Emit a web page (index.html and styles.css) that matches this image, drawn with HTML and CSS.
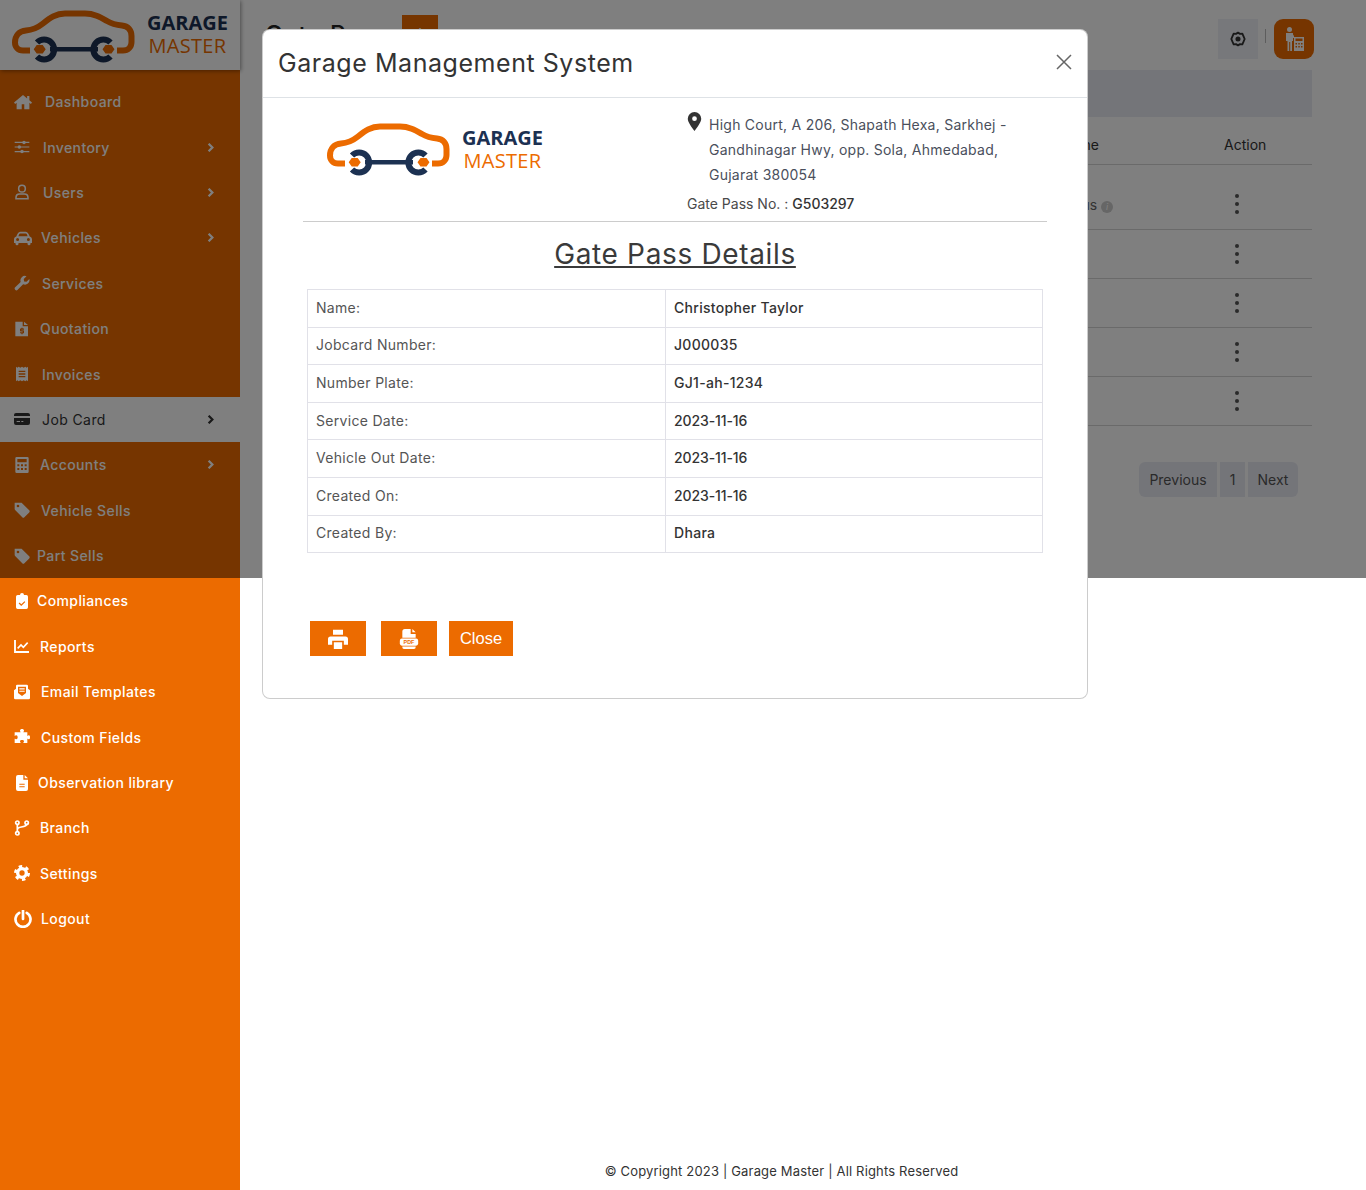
FILE: index.html
```html
<!DOCTYPE html>
<html lang="en">
<head>
  <meta charset="UTF-8" />
  <title>Garage Master - Gate Pass</title>
  <link rel="stylesheet" href="styles.css">
</head>
<body>

  <svg class="sprite" xmlns="http://www.w3.org/2000/svg">
    <symbol id="i-home" viewBox="0 0 24 24"><path d="M12 2.500 0 12.800l1.500 1.800L3.500 13v8.500h6.800V15h3.400v6.500h6.800V13l2 1.600 1.500-1.800-3.500-3V4h-3v3.200z"/></symbol>
    <symbol id="i-sliders" viewBox="0 0 24 24"><path d="M1 5.200h22M1 12h22M1 18.800h22" fill="none" stroke="currentColor" stroke-width="1.800"/><circle cx="15" cy="5.200" r="2.600"/><circle cx="8" cy="12" r="2.600"/><circle cx="12" cy="18.800" r="2.600"/></symbol>
    <symbol id="i-user" viewBox="0 0 24 24"><g fill="none" stroke="currentColor" stroke-width="2.300"><circle cx="12" cy="7" r="5"/><path d="M3 22v-1.500C3 17 5.500 15 8.500 15h7c3 0 5.500 2 5.500 5.500V22z"/></g></symbol>
    <symbol id="i-car" viewBox="0 0 24 24"><path fill-rule="evenodd" d="M0 14c0-2 1.200-3.600 3-4l1.600-3.500C5.300 5 6.800 3.500 8.500 3.500h7c1.700 0 3.200 1.500 3.900 3L21 10c1.800.4 3 2 3 4v4.500h-2v1a2 2 0 0 1-4 0v-1H6v1a2 2 0 0 1-4 0v-1H0zM7 6.800 5.800 9.800h12.400L17 6.800c-.2-.5-.7-.8-1.200-.8H8.200c-.5 0-1 .3-1.200.8zM4.800 16a2 2 0 1 0 0-4 2 2 0 0 0 0 4zm14.400 0a2 2 0 1 0 0-4 2 2 0 0 0 0 4z"/></symbol>
    <symbol id="i-wrench" viewBox="0 0 24 24"><path d="M23 6l-4.200 4.200-3.600-.6-.6-3.600L18.800 1.800A6.800 6.800 0 0 0 10 10.400L1.800 18.500a2.600 2.600 0 0 0 3.700 3.700L13.700 14A6.800 6.800 0 0 0 23 6z"/></symbol>
    <symbol id="i-quote" viewBox="0 0 24 24"><path fill-rule="evenodd" d="M2 1h11v7h8v15H2zM15 1l6 5h-6zM11 10h2v1.200h2v1.800h-4v1h3a1 1 0 0 1 1 1v2.500a1 1 0 0 1-1 1h-1V20h-2v-1.500H9v-1.800h4v-1h-3a1 1 0 0 1-1-1V12.200a1 1 0 0 1 1-1h1z"/></symbol>
    <symbol id="i-receipt" viewBox="0 0 24 24"><path fill-rule="evenodd" d="M3 1l2 1.500L7 1l2.500 1.500L12 1l2.500 1.500L17 1l2 1.500L21 1v22l-2-1.500-2 1.500-2.500-1.500L12 23l-2.500-1.500L7 23l-2-1.500L3 23zM7 7v2h10V7zm0 4v2h10v-2zm0 4v2h10v-2z"/></symbol>
    <symbol id="i-card" viewBox="0 0 24 24"><path fill-rule="evenodd" d="M3 3h18a3 3 0 0 1 3 3v1.500H0V6a3 3 0 0 1 3-3zM0 10.500h24V18a3 3 0 0 1-3 3H3a3 3 0 0 1-3-3zM4 15v1.500h5V15zm7 0v1.500h3V15z"/></symbol>
    <symbol id="i-calc" viewBox="0 0 24 24"><path fill-rule="evenodd" d="M4 0h16a2 2 0 0 1 2 2v20a2 2 0 0 1-2 2H4a2 2 0 0 1-2-2V2a2 2 0 0 1 2-2zM5 3v5h14V3zm0 8v3h3v-3zm5.500 0v3h3v-3zm5.500 0v3h3v-3zM5 16.500v3h3v-3zm5.500 0v3h3v-3zm5.500 0v3h3v-3z"/></symbol>
    <symbol id="i-tag" viewBox="0 0 24 24"><path fill-rule="evenodd" d="M1 1h9.500c.6 0 1.200.2 1.600.7L22.800 12.400a2.300 2.300 0 0 1 0 3.200l-7.200 7.200a2.300 2.300 0 0 1-3.200 0L1.700 12.100A2.300 2.300 0 0 1 1 10.500zM6 8a2 2 0 1 0 0-4 2 2 0 0 0 0 4z"/></symbol>
    <symbol id="i-clip" viewBox="0 0 24 24"><path fill-rule="evenodd" d="M9 3a3 3 0 0 1 6 0h3.500A2.500 2.500 0 0 1 21 5.500v16a2.500 2.500 0 0 1-2.500 2.500h-13A2.500 2.500 0 0 1 3 21.500v-16A2.500 2.500 0 0 1 5.500 3zm6.700 9.200-4.800 4.800-2.600-2.600-1.300 1.300 3.900 3.900 6.100-6.100z"/></symbol>
    <symbol id="i-chart" viewBox="0 0 24 24"><path d="M1.500 3v18h21" fill="none" stroke="currentColor" stroke-width="2.800"/><path d="M5.500 15.500l5-5 3.500 3.500 6.500-7" fill="none" stroke="currentColor" stroke-width="2.400"/></symbol>
    <symbol id="i-mail" viewBox="0 0 24 24"><path fill-rule="evenodd" d="M5 1h14a2 2 0 0 1 2 2v4l3 2.500V21a2 2 0 0 1-2 2H2a2 2 0 0 1-2-2V9.500L3 7V3a2 2 0 0 1 2-2zm1 3v9.500l6 4.500 6-4.500V4zm2 2.500h8v1.800H8zm0 3.500h8v1.800H8z"/></symbol>
    <symbol id="i-puzzle" viewBox="0 0 24 24"><path d="M9 2.500C9 1 10.200 0 12 0s3 1 3 2.500c0 1-1 1.500-1 2.500h6v5.500c1 0 1.500-1 2.500-1C23.700 9.500 24 11 24 12.500s-.3 3-1.500 3c-1 0-1.500-1-2.500-1V21h-6c0-1 1-1.500 1-2.500 0-1.200-1.300-2-3-2s-3 .8-3 2c0 1 1 2 1 2.500H1v-6.500c1 0 1.500 1 2.500 1 1.200 0 2-1.300 2-3s-.8-3-2-3c-1 0-1.500 1-2.500 1V5h9c0-1-1-1.500-1-2.500z"/></symbol>
    <symbol id="i-file" viewBox="0 0 24 24"><path fill-rule="evenodd" d="M3 3a3 3 0 0 1 3-3h8v7h7v14a3 3 0 0 1-3 3H6a3 3 0 0 1-3-3zM16 0l5 5h-5zM8 13v1.700h8V13zm0 3.800v1.700h8v-1.700z"/></symbol>
    <symbol id="i-branch" viewBox="0 0 24 24"><g fill="none" stroke="currentColor" stroke-width="2.600"><circle cx="5" cy="4" r="2.500"/><circle cx="5" cy="20" r="2.500"/><circle cx="19" cy="4" r="2.500"/><path d="M5 6.500v11M5 15c0-3 2-4 6-4.500 5-.6 8-1.500 8-4"/></g></symbol>
    <symbol id="i-gear" viewBox="0 0 24 24"><g fill="none" stroke="currentColor"><circle cx="12" cy="12" r="6.500" stroke-width="5"/><circle cx="12" cy="12" r="10" stroke-width="4" stroke-dasharray="5.200 5.270"/></g></symbol>
    <symbol id="i-hexgear" viewBox="0 0 24 24"><path d="M12 2.500 15 4.300 18.500 4 20 7.300 22 12 20 16.700 18.500 20 15 19.700 12 21.500 9 19.700 5.500 20 4 16.700 2 12 4 7.300 5.500 4 9 4.300z" fill="none" stroke="currentColor" stroke-width="2.800" stroke-linejoin="round"/><circle cx="12" cy="12" r="3.800"/></symbol>
    <symbol id="i-power" viewBox="0 0 24 24"><path d="M7 3.800a10 10 0 1 0 10 0M12 1v11" fill="none" stroke="currentColor" stroke-width="3.600" stroke-linecap="round"/></symbol>
    <symbol id="i-chevron" viewBox="0 0 24 24"><path d="M7 2l10 10L7 22" fill="none" stroke="currentColor" stroke-width="6"/></symbol>
    <symbol id="i-pin" viewBox="0 0 18 24"><path fill-rule="evenodd" d="M9 0a8.500 8.500 0 0 1 8.500 8.500C17.500 13 12 20 9 24 6 20 .5 13 .5 8.500A8.500 8.500 0 0 1 9 0zm0 5.500a3 3 0 1 0 0 6 3 3 0 0 0 0-6z"/></symbol>
    <symbol id="i-print" viewBox="0 0 24 24"><path fill-rule="evenodd" d="M6 1h12v6H6zM3 9h18a3 3 0 0 1 3 3v7h-5v-5H5v5H0v-7a3 3 0 0 1 3-3zM7 16h10v8H7z"/></symbol>
    <symbol id="i-pdf" viewBox="0 0 24 24">
      <path d="M4 3a3 3 0 0 1 3-3h7v6h6v4.500H4zM16 0l4 4h-4zM4 21h16v1a2 2 0 0 1-2 2H6a2 2 0 0 1-2-2z"/>
      <rect x="1" y="11.500" width="22" height="8.500" rx="2.500"/>
      <text class="pdf-mark" x="12" y="18">PDF</text>
    </symbol>
    <symbol id="i-logo" viewBox="0 0 123 53">
      <path d="M18 40.500H11C6 40.500 3 37 3 32.500 3 26 7 21 14 20.500 20 20 26 17.500 31 13.500 38 8 44 3.500 53 3.500H73C82 3.500 88 7 95 11 100 14 105 15 110 15.500 116 16 119.500 20 119.500 26V32C119.500 37 116 40.500 111 40.500H105" fill="none" stroke="#ec6b00" stroke-width="6"/>
      <path d="M25 32.500A10 10 0 1 1 25 46.500M98.500 32.500A10 10 0 1 0 98.500 46.500" fill="none" stroke="#1c3152" stroke-width="6"/>
      <path d="M38 37h48v4.600H38z" fill="#1c3152"/>
      <path d="M24.700 35h6l3 4.300-3 4.300h-6l-3-4.300zM93.500 35h6l3 4.300-3 4.300h-6l-3-4.300z" fill="#ec6b00"/>
    </symbol>
  </svg>

  <div class="layout">
    <aside class="sidebar">
      <div class="sidebar-logo">
        <svg class="logo-car"><use href="#i-logo"/></svg>
        <div class="logo-text"><b>GARAGE</b><span>MASTER</span></div>
      </div>
      <nav class="menu">
        <a class="menu-item"><svg class="ico ico-lg"><use href="#i-home"/></svg><span class="x8">Dashboard</span></a>
        <a class="menu-item"><svg class="ico"><use href="#i-sliders"/></svg><span class="x6">Inventory</span><svg class="arrow"><use href="#i-chevron"/></svg></a>
        <a class="menu-item"><svg class="ico"><use href="#i-user"/></svg><span class="x6">Users</span><svg class="arrow"><use href="#i-chevron"/></svg></a>
        <a class="menu-item"><svg class="ico ico-lg"><use href="#i-car"/></svg><span class="x4">Vehicles</span><svg class="arrow"><use href="#i-chevron"/></svg></a>
        <a class="menu-item"><svg class="ico"><use href="#i-wrench"/></svg><span class="x5">Services</span></a>
        <a class="menu-item"><svg class="ico"><use href="#i-quote"/></svg><span class="x3">Quotation</span></a>
        <a class="menu-item"><svg class="ico"><use href="#i-receipt"/></svg><span class="x5">Invoices</span></a>
        <a class="menu-item active"><svg class="ico"><use href="#i-card"/></svg><span class="x5">Job Card</span><svg class="arrow"><use href="#i-chevron"/></svg></a>
        <a class="menu-item"><svg class="ico"><use href="#i-calc"/></svg><span class="x3">Accounts</span><svg class="arrow"><use href="#i-chevron"/></svg></a>
        <a class="menu-item"><svg class="ico"><use href="#i-tag"/></svg><span class="x4">Vehicle Sells</span></a>
        <a class="menu-item"><svg class="ico"><use href="#i-tag"/></svg><span>Part Sells</span></a>
        <a class="menu-item"><svg class="ico"><use href="#i-clip"/></svg><span>Compliances</span></a>
        <a class="menu-item"><svg class="ico"><use href="#i-chart"/></svg><span class="x3">Reports</span></a>
        <a class="menu-item"><svg class="ico"><use href="#i-mail"/></svg><span class="x4">Email Templates</span></a>
        <a class="menu-item"><svg class="ico"><use href="#i-puzzle"/></svg><span class="x4">Custom Fields</span></a>
        <a class="menu-item"><svg class="ico"><use href="#i-file"/></svg><span class="x1">Observation library</span></a>
        <a class="menu-item"><svg class="ico"><use href="#i-branch"/></svg><span class="x3">Branch</span></a>
        <a class="menu-item"><svg class="ico"><use href="#i-gear"/></svg><span class="x3">Settings</span></a>
        <a class="menu-item"><svg class="ico ico-lg"><use href="#i-power"/></svg><span class="x4">Logout</span></a>
      </nav>
    </aside>

    <main class="content">
      <div class="topbar">
        <h2 class="page-title">Gate Pass</h2>
        <button class="add-btn">+</button>
        <div class="top-actions">
          <div class="gear-box"><svg class="gear-ico"><use href="#i-hexgear"/></svg></div>
          <div class="top-sep"></div>
          <div class="user-btn">
            <svg class="user-ico" viewBox="0 0 19 24">
              <circle cx="4.500" cy="2.500" r="2.500"/>
              <path d="M1 6h7v1.500L9 9v2H8v3H7v10H5.200V15h-1v9H2.500V14H1z"/>
              <path fill-rule="evenodd" d="M9 10h10v14H9zM10.500 11.500V14h7v-2.500zM10.500 16v1.500H12V16zm2.800 0v1.500h1.500V16zm2.700 0v1.500h1.500V16zM10.500 19v1.500H12V19zm2.800 0v1.500h1.500V19zm2.700 0v1.500h1.500V19z"/>
            </svg>
          </div>
        </div>
      </div>
      <div class="filter-band"></div>
      <div class="list">
        <div class="list-row list-head"><span class="col-name">Service Name</span><span class="col-action">Action</span></div>
        <div class="list-row first"><span class="col-name">Status <i class="info">i</i></span><span class="col-action"><i class="dots"></i></span></div>
        <div class="list-row"><span class="col-name"></span><span class="col-action"><i class="dots"></i></span></div>
        <div class="list-row"><span class="col-name"></span><span class="col-action"><i class="dots"></i></span></div>
        <div class="list-row"><span class="col-name"></span><span class="col-action"><i class="dots"></i></span></div>
        <div class="list-row"><span class="col-name"></span><span class="col-action"><i class="dots"></i></span></div>
      </div>
      <div class="pagination">
        <span class="page-link prev">Previous</span>
        <span class="page-link num">1</span>
        <span class="page-link next">Next</span>
      </div>
      <footer class="copyright">© Copyright 2023 | Garage Master | All Rights Reserved</footer>
    </main>
  </div>

  <div class="backdrop"></div>

  <div class="modal">
    <div class="modal-header">
      <h4 class="modal-title">Garage Management System</h4>
      <svg class="modal-close" viewBox="0 0 16 16"><path d="M1 1l14 14M15 1L1 15" fill="none" stroke="currentColor" stroke-width="1.500"/></svg>
    </div>
    <div class="modal-body">
      <div class="pass-head">
        <div class="pass-logo">
          <svg class="logo-car"><use href="#i-logo"/></svg>
          <div class="logo-text"><b>GARAGE</b><span>MASTER</span></div>
        </div>
        <div class="pass-info">
          <div class="address">
            <svg class="pin"><use href="#i-pin"/></svg>
            <p>High Court, A 206, Shapath Hexa, Sarkhej - Gandhinagar Hwy, opp. Sola, Ahmedabad, Gujarat 380054</p>
          </div>
          <div class="pass-no">Gate Pass No. : <b>G503297</b></div>
        </div>
      </div>
      <hr class="pass-rule" />
      <h3 class="pass-title">Gate Pass Details</h3>
      <table class="pass-table">
        <tr><td>Name:</td><td>Christopher Taylor</td></tr>
        <tr><td>Jobcard Number:</td><td>J000035</td></tr>
        <tr><td>Number Plate:</td><td>GJ1-ah-1234</td></tr>
        <tr><td>Service Date:</td><td class="date">2023-11-16</td></tr>
        <tr><td>Vehicle Out Date:</td><td class="date">2023-11-16</td></tr>
        <tr><td>Created On:</td><td class="date">2023-11-16</td></tr>
        <tr><td>Created By:</td><td>Dhara</td></tr>
      </table>
      <div class="modal-actions">
        <button class="btn-orange btn-icon"><svg><use href="#i-print"/></svg></button>
        <button class="btn-orange btn-icon"><svg><use href="#i-pdf"/></svg></button>
        <button class="btn-orange btn-close">Close</button>
      </div>
    </div>
  </div>

</body>
</html>
```

FILE: styles.css
```css
* {
  box-sizing: border-box;
}
body {
  margin: 0;
  height: 1190px;
  overflow: hidden;
  background-color: #fff;
  color: #333;
  font-family: Inter, "Liberation Sans", sans-serif;
  font-size: 14px;
  position: relative;
}
.sprite {
  display: none;
}
.layout {
  display: flex;
  height: 1190px;
}

/* sidebar */
.sidebar {
  width: 240px;
  flex: none;
  background-color: #ec6b00;
  color: #fff;
}
.sidebar-logo {
  height: 70px;
  background-color: #fff;
  box-shadow: 1px 1px 4px rgba(0, 0, 0, 0.4);
  display: flex;
  padding: 10px 0 0 12px;
}
.logo-car {
  width: 123px;
  height: 53px;
  flex: none;
}
.logo-text {
  font-family: "Open Sans", sans-serif;
  font-size: 20px;
  line-height: 23px;
  display: flex;
  flex-direction: column;
  align-items: center;
  margin: 1px 0 0 12px;
}
.logo-text b {
  color: #1c3152;
  font-weight: 700;
}
.logo-text span {
  color: #ec6b00;
  letter-spacing: 0.3px;
}
.menu {
  padding-top: 9px;
}
.menu-item {
  height: 45.4px;
  display: flex;
  align-items: center;
  padding-left: 14px;
  font-size: 14px;
  font-weight: 500;
  letter-spacing: 0.4px;
}
.menu-item.active {
  background-color: #fff;
  color: #333;
  font-weight: 400;
}
.ico {
  width: 16px;
  height: 16px;
  fill: currentColor;
  margin-right: 7px;
  flex: none;
}
.ico-lg {
  width: 18px;
  height: 18px;
  margin-right: 5px;
}
.x1 { margin-left: 1px; }
.x3 { margin-left: 3px; }
.x4 { margin-left: 4px; }
.x5 { margin-left: 5px; }
.x6 { margin-left: 6px; }
.x8 { margin-left: 8px; }
.arrow {
  width: 9px;
  height: 9px;
  margin-left: auto;
  margin-right: 25px;
}

/* page behind the modal */
.content {
  flex: 1;
  padding: 0 54px 0 25px;
  position: relative;
}
.topbar {
  display: flex;
  height: 70px;
  padding-top: 15px;
}
.page-title {
  margin: 5px 0 0;
  width: 137px;
  font-size: 24px;
  line-height: 29px;
  letter-spacing: 1px;
  font-weight: 500;
  color: #222;
}
.add-btn {
  width: 36px;
  height: 36px;
  border: none;
  background-color: #ec6b00;
  color: #fff;
  font-size: 20px;
}
.top-actions {
  margin-left: auto;
  margin-top: 4px;
  display: flex;
  align-items: flex-start;
  margin-right: -2px;
}
.gear-box {
  width: 40px;
  height: 40px;
  background-color: #eef0f7;
  display: flex;
  align-items: center;
  justify-content: center;
}
.gear-ico {
  width: 16px;
  height: 16px;
  color: #333;
  fill: #333;
}
.top-sep {
  width: 1px;
  height: 14px;
  background-color: #bbb;
  margin: 10px 8px 0 7px;
}
.user-btn {
  width: 40px;
  height: 40px;
  border-radius: 9px;
  background-color: #ec6b00;
  display: flex;
  align-items: center;
  justify-content: center;
}
.user-ico {
  width: 19px;
  height: 24px;
  fill: #fff;
}
.filter-band {
  height: 47px;
  background-color: #e9ebf3;
}
.list-row {
  display: flex;
  justify-content: space-between;
  height: 49px;
  border-bottom: 1px solid #d5d5d5;
  align-items: center;
}
.list-head {
  height: 48px;
  align-items: flex-end;
  padding-bottom: 11px;
  color: #333;
}
.list-row.first {
  height: 65px;
  padding-top: 14px;
}
.col-name {
  width: 834px;
  text-align: right;
  color: #666;
}
.list-head .col-name {
  color: #333;
}
.col-action {
  width: 88px;
}
.info {
  display: inline-block;
  width: 12px;
  height: 12px;
  margin-right: -14px;
  border-radius: 50%;
  background-color: #ccc;
  color: #fff;
  font-size: 9px;
  line-height: 12px;
  text-align: center;
}
.dots {
  display: block;
  width: 4px;
  height: 4px;
  margin-left: 11px;
  border-radius: 50%;
  background-color: #555;
  box-shadow: 0 8px 0 #555, 0 -8px 0 #555;
}
.pagination {
  display: flex;
  justify-content: flex-end;
  gap: 3px;
  margin: 36px 14px 0 0;
}
.page-link {
  height: 35px;
  line-height: 35px;
  text-align: center;
  background-color: #e9ebf3;
  color: #555;
}
.prev {
  width: 78px;
  border-radius: 6px 0 0 6px;
}
.num {
  width: 25px;
}
.next {
  width: 50px;
  border-radius: 0 6px 6px 0;
}
.copyright {
  position: absolute;
  left: 0;
  bottom: 11px;
  width: 1083px;
  text-align: center;
  font-size: 13px;
  letter-spacing: 0.17px;
}

/* modal */
.backdrop {
  position: absolute;
  top: 0;
  left: 0;
  right: 0;
  height: 578px;
  background-color: rgba(0, 0, 0, 0.5);
}
.modal {
  position: absolute;
  top: 29px;
  left: 262px;
  width: 826px;
  height: 670px;
  background-color: #fff;
  border: 1px solid rgba(0, 0, 0, 0.2);
  border-radius: 8px;
}
.modal-header {
  height: 68px;
  border-bottom: 1px solid #dee2e6;
  display: flex;
  align-items: center;
  justify-content: space-between;
  padding: 0 15px;
}
.modal-title {
  margin: 0 0 2px;
  font-size: 25px;
  font-weight: 400;
  letter-spacing: 0.55px;
  color: #333;
}
.modal-close {
  width: 16px;
  height: 16px;
  color: #666;
  margin-bottom: 3px;
}
.modal-body {
  padding: 0 40px;
}
.pass-head {
  display: grid;
  grid-template-columns: 384px 1fr;
  height: 123px;
}
.pass-logo {
  display: flex;
  padding: 25px 0 0 24px;
}
.pass-logo .logo-text {
  margin: 3px 0 0 12px;
}
.pass-info {
  padding-top: 14px;
}
.address {
  display: flex;
  color: #4a4f5c;
  height: 74px;
}
.pin {
  width: 15px;
  height: 19px;
  fill: #333;
  flex: none;
  margin-right: 7px;
}
.address p {
  margin: 0;
  width: 310px;
  line-height: 25px;
  font-size: 14px;
  letter-spacing: 0.25px;
}
.pass-no {
  margin-top: 9px;
  color: #4a4a4a;
  font-size: 14px;
}
.pass-no b {
  font-weight: 500;
  color: #333;
}
.pass-rule {
  margin: 0;
  border: none;
  border-top: 1px solid #ccc;
}
.pass-title {
  margin: 15px 0 18px;
  text-align: center;
  font-size: 28px;
  line-height: 34px;
  font-weight: 400;
  letter-spacing: 0.65px;
  text-decoration: underline;
  color: #3a3a3a;
}
.pass-table {
  width: 736px;
  margin: 0 4px;
  border-collapse: collapse;
  table-layout: fixed;
}
.pass-table td {
  border: 1px solid #e1e1e8;
  height: 37.6px;
  padding: 0 8px 2px;
  color: #555;
  letter-spacing: 0.3px;
}
.pass-table td:first-child {
  width: 358px;
}
.pass-table td + td {
  font-weight: 500;
  color: #333;
}
.pass-table td.date {
  letter-spacing: -0.1px;
}
.modal-actions {
  display: flex;
  margin: 68px 0 0 7px;
}
.btn-orange {
  height: 35px;
  border: none;
  background-color: #ec6b00;
  color: #fff;
  padding: 0;
  display: flex;
  align-items: center;
  justify-content: center;
}
.btn-icon {
  width: 56px;
  margin-right: 15px;
}
.btn-icon + .btn-icon {
  margin-right: 12px;
}
.btn-icon svg {
  width: 20px;
  height: 20px;
  fill: #fff;
}
.pdf-mark {
  font-family: "Liberation Sans", sans-serif;
  font-size: 6.5px;
  font-weight: 700;
  text-anchor: middle;
  fill: #ec6b00;
}
.btn-close {
  width: 64px;
  font-family: "Liberation Sans", sans-serif;
  font-size: 16.5px;
}
```
